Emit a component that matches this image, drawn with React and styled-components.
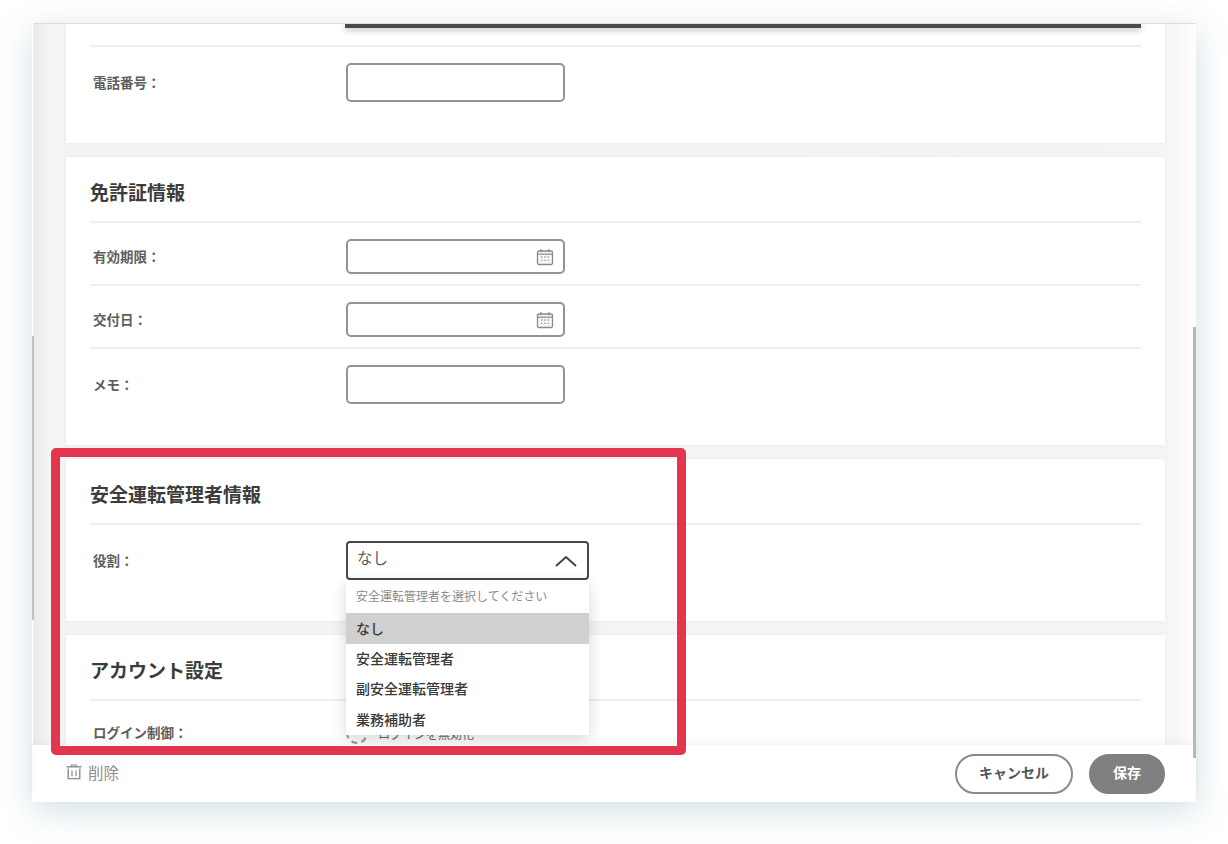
import React from 'react'
import styled, { createGlobalStyle } from 'styled-components'

const GlobalStyle = createGlobalStyle`
    html, body {
        margin: 0;
        padding: 0;
        background: #fff;
    }
    body {
        font-family: "Noto Sans CJK JP", "Noto Sans", sans-serif;
    }
    * {
        box-sizing: border-box;
    }
`

function CalendarIcon() {
    return (
        <svg width="18" height="18" viewBox="0 0 18 18" fill="none">
            <rect x="1.5" y="3" width="15" height="13.5" rx="1.5" stroke="#8a8a8a" strokeWidth="1.3" fill="#f6f6f6" />
            <path d="M1.5 6.2h15" stroke="#8a8a8a" strokeWidth="1.2" />
            <path d="M5 1v3.2M13 1v3.2" stroke="#8a8a8a" strokeWidth="1.2" />
            <path d="M5 9h1.4M8.3 9h1.4M11.6 9h1.4M5 12.4h1.4M8.3 12.4h1.4M11.6 12.4h1.4" stroke="#9a9a9a" strokeWidth="1.4" />
        </svg>
    )
}

function TrashIcon() {
    return (
        <svg width="16" height="16" viewBox="0 0 16 16" fill="none">
            <path d="M0.5 2.8h15" stroke="#8a8a8a" strokeWidth="1.4" />
            <path d="M5.5 2.8V1h5v1.8" stroke="#8a8a8a" strokeWidth="1.1" />
            <path d="M2.2 4.6v10h11.6v-10" stroke="#8a8a8a" strokeWidth="1.4" />
            <path d="M6 6.5v5.8M10 6.5v5.8" stroke="#8a8a8a" strokeWidth="1.2" />
        </svg>
    )
}

function ChevronUp() {
    return (
        <svg width="22" height="12" viewBox="0 0 22 12" fill="none">
            <path d="M1 11L11 2l10 9" stroke="#444" strokeWidth="2" />
        </svg>
    )
}

const options = ['なし', '安全運転管理者', '副安全運転管理者', '業務補助者']

function App() {
    return (
        <>
            <GlobalStyle />
            <Page>
                <Window>
                    <Scroller>
                        <Card>
                            <TableEdge />
                            <Row>
                                <Label>電話番号：</Label>
                                <TextBox />
                            </Row>
                        </Card>

                        <Card>
                            <Title>免許証情報</Title>
                            <Row>
                                <Label>有効期限：</Label>
                                <DateBox><CalendarIcon /></DateBox>
                            </Row>
                            <Row>
                                <Label>交付日：</Label>
                                <DateBox><CalendarIcon /></DateBox>
                            </Row>
                            <Row>
                                <Label>メモ：</Label>
                                <TextBox />
                            </Row>
                        </Card>

                        <Card>
                            <Title>安全運転管理者情報</Title>
                            <Row>
                                <Label>役割：</Label>
                                <SelectWrap>
                                    <SelectBox>
                                        <SelectValue>なし</SelectValue>
                                        <ChevronUp />
                                    </SelectBox>
                                    <Menu>
                                        <MenuHint>安全運転管理者を選択してください</MenuHint>
                                        {options.map((o, i) => (
                                            <MenuItem key={o} $selected={i === 0}>{o}</MenuItem>
                                        ))}
                                    </Menu>
                                </SelectWrap>
                            </Row>
                        </Card>

                        <Card>
                            <Title>アカウント設定</Title>
                            <Row>
                                <Label>ログイン制御：</Label>
                                <Toggle>
                                    <DashedDot />
                                    ログインを無効化
                                </Toggle>
                            </Row>
                        </Card>
                    </Scroller>

                    <Footer>
                        <DeleteBtn><TrashIcon />削除</DeleteBtn>
                        <FooterBtns>
                            <CancelBtn>キャンセル</CancelBtn>
                            <SaveBtn>保存</SaveBtn>
                        </FooterBtns>
                    </Footer>

                    <LeftTrack />
                    <RightThumb />
                    <Highlight />
                </Window>
            </Page>
        </>
    )
}

export default App

const Page = styled.div`
    width: 1228px;
    height: 844px;
    padding: 23px 32px 42px 33px;
    background: #fff;
    overflow: hidden;
`

const Window = styled.div`
    position: relative;
    height: 779px;
    display: flex;
    flex-direction: column;
    background: #fff;
    box-shadow: -1px 0 0 #fff, 0 8px 32px rgba(90, 140, 155, 0.28);
`

const Scroller = styled.div`
    flex: 1;
    min-height: 0;
    overflow: hidden;
    display: flex;
    flex-direction: column;
    gap: 14px;
    padding: 0 31px 0 33px;
    border-top: 1px solid #dcdcdc;
    background: linear-gradient(90deg, #e9e9e9 0, #f6f6f6 18px, #f3f3f3 33px, #f4f4f4 1130px, #fdfdfd 100%);
`

const Card = styled.section`
    flex-shrink: 0;
    position: relative;
    background: #fff;
    padding: 0 24px 31px;
    box-shadow: 0 0 3px rgba(0, 0, 0, 0.05);
`

const TableEdge = styled.div`
    height: 21px;
    margin-left: 255px;
    position: relative;
    &::before {
        content: '';
        display: block;
        height: 4px;
        background: #4a4a4a;
        box-shadow: 0 2px 6px rgba(0, 0, 0, 0.3);
    }
`

const Title = styled.h2`
    height: 64px;
    margin: 0;
    padding-top: 5px;
    display: flex;
    align-items: center;
    font-size: 19px;
    font-weight: 700;
    color: #3c3c3c;
`

const Row = styled.div`
    display: flex;
    align-items: center;
    padding: 16px 0 10px;
    border-top: 2px solid #efefef;
`

const Label = styled.div`
    width: 256px;
    padding: 0 0 2px 3px;
    flex-shrink: 0;
    font-size: 13.5px;
    font-weight: 700;
    color: #5e5e5e;
`

const TextBox = styled.div`
    width: 219px;
    height: 39px;
    background: #fff;
    border: 2px solid #939393;
    border-radius: 5px;
`

const DateBox = styled(TextBox)`
    height: 35px;
    display: flex;
    align-items: center;
    justify-content: flex-end;
    padding-right: 9px;
`

const SelectWrap = styled.div`
    position: relative;
    width: 243px;
`

const SelectBox = styled.div`
    height: 39px;
    display: flex;
    align-items: center;
    justify-content: space-between;
    padding: 0 10px 0 9px;
    background: #fff;
    border: 2px solid #484848;
    border-radius: 4px;
    color: #5a5a5a;
`

const SelectValue = styled.span`
    font-size: 15.5px;
    margin-bottom: 7px;
`

const Menu = styled.div`
    position: absolute;
    top: 100%;
    left: 0;
    right: 0;
    z-index: 5;
    background: #fff;
    box-shadow: 0 4px 14px rgba(0, 0, 0, 0.16);
`

const MenuHint = styled.div`
    height: 33px;
    padding: 0 10px 2px;
    display: flex;
    align-items: center;
    font-size: 12px;
    color: #8c8c8c;
`

const MenuItem = styled.div`
    height: 30.5px;
    padding: 0 10px ${props => (props.$selected ? '0' : '2px')};
    display: flex;
    align-items: center;
    font-size: 14px;
    font-weight: 500;
    color: #3a3a3a;
    background: ${props => (props.$selected ? '#d0d0d0' : '#fff')};
`

const Toggle = styled.div`
    height: 32px;
    display: flex;
    align-items: center;
    gap: 10px;
    font-size: 12px;
    color: #666;
`

const DashedDot = styled.span`
    width: 22px;
    height: 22px;
    border: 2px dashed #999;
    border-radius: 50%;
`

const Footer = styled.footer`
    position: relative;
    z-index: 6;
    height: 57px;
    flex-shrink: 0;
    display: flex;
    align-items: center;
    justify-content: space-between;
    padding: 0 31px 0 33px;
    background: #fff;
    box-shadow: 0 -3px 8px rgba(0, 0, 0, 0.04);
`

const DeleteBtn = styled.div`
    display: flex;
    align-items: center;
    gap: 6px;
    padding-bottom: 3px;
    font-size: 15.5px;
    color: #8c8c8c;
`

const FooterBtns = styled.div`
    display: flex;
    gap: 16px;
`

const CancelBtn = styled.div`
    width: 118px;
    height: 40px;
    padding-bottom: 3px;
    display: flex;
    align-items: center;
    justify-content: center;
    border: 2px solid #8a8a8a;
    border-radius: 20px;
    background: #fff;
    font-size: 14px;
    font-weight: 700;
    color: #555;
`

const SaveBtn = styled(CancelBtn)`
    width: 76px;
    background: #808080;
    border-color: #808080;
    color: #fff;
`

const LeftTrack = styled.div`
    position: absolute;
    left: -1px;
    top: 313px;
    width: 2px;
    height: 284px;
    background: #bfbfbf;
`

const RightThumb = styled.div`
    position: absolute;
    right: 0;
    top: 304px;
    width: 3px;
    height: 431px;
    z-index: 7;
    background: #b8b8b8;
`

const Highlight = styled.div`
    position: absolute;
    left: 18px;
    top: 425px;
    width: 635px;
    height: 307px;
    z-index: 8;
    border: 9px solid #e3364e;
    border-radius: 5px;
    pointer-events: none;
`
